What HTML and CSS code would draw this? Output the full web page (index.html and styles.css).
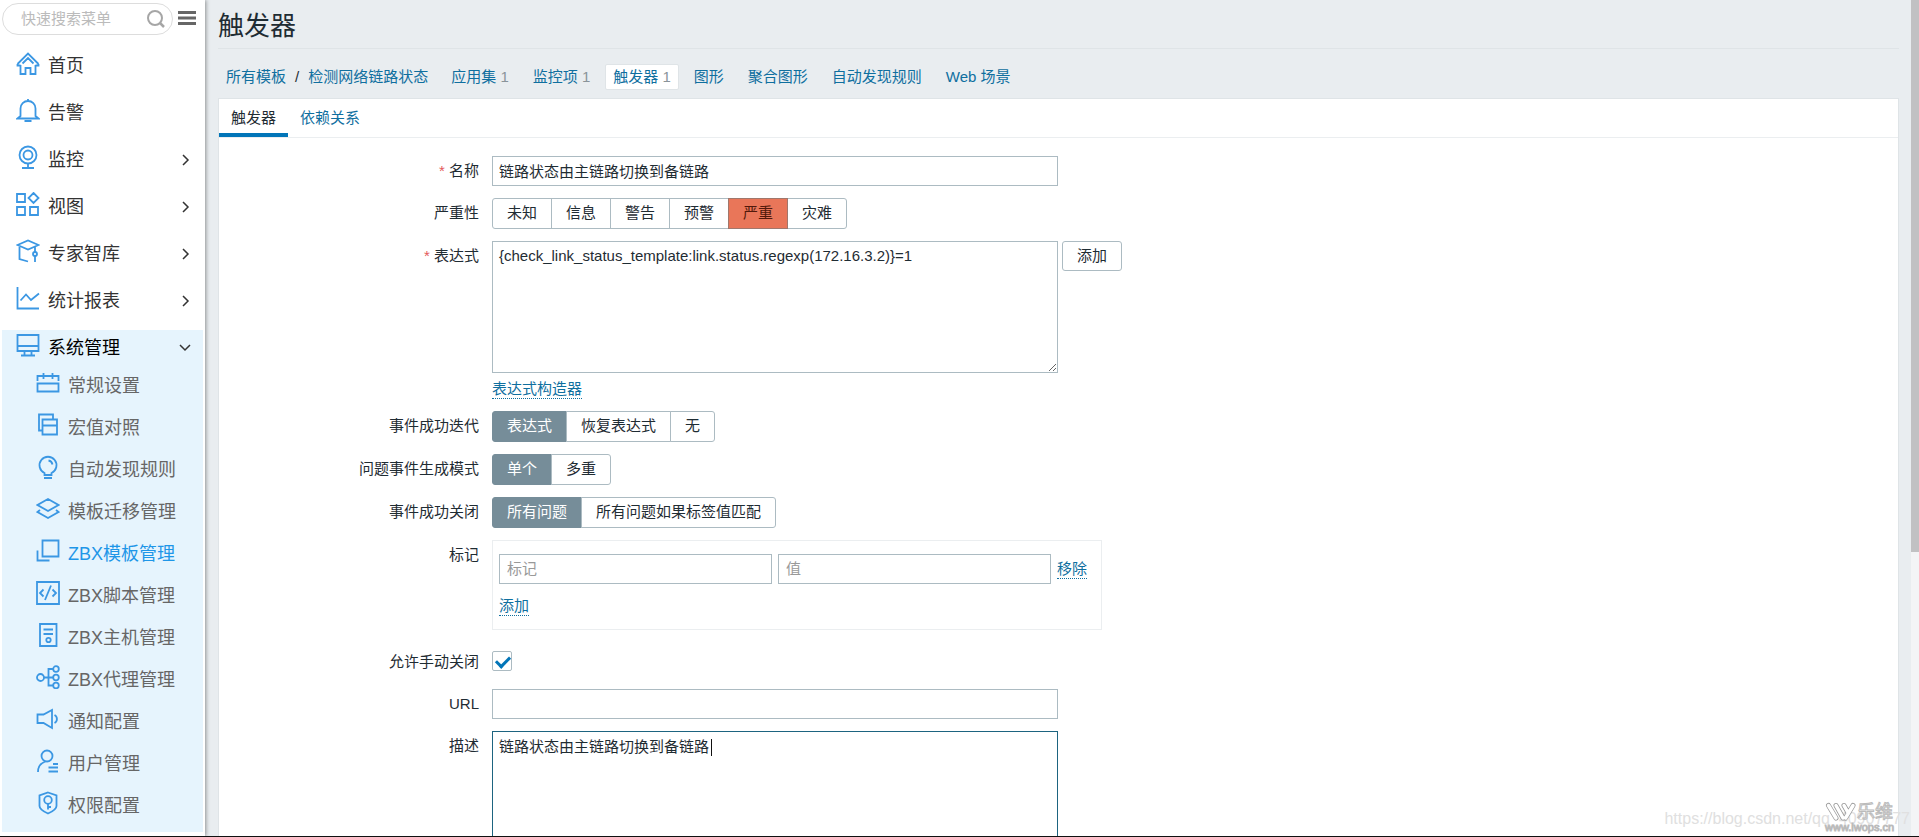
FILE: index.html
```html
<!DOCTYPE html>
<html lang="zh-CN">
<head>
<meta charset="utf-8">
<title>触发器</title>
<link rel="stylesheet" href="styles.css">
</head>
<body>
<div class="app">
  <aside class="sidebar">
    <div class="search-row">
      <div class="search">
        <input class="search-input" type="text" placeholder="快速搜索菜单" aria-label="快速搜索菜单">
        <button class="icon-button" type="button" aria-label="搜索"><svg width="20" height="20" viewBox="0 0 20 20" fill="none" stroke="#a6a6a6" stroke-width="2"><circle cx="9" cy="9" r="7"/><path d="M14 14l4 4" stroke-width="2.5"/></svg></button>
      </div>
      <button class="icon-button" type="button" aria-label="折叠菜单"><svg width="18" height="16" viewBox="0 0 18 16" fill="#666"><path d="M0 0h18v3H0zM0 5.500h18v3H0zM0 11h18v3H0z"/></svg></button>
    </div>
    <nav class="menu">
      <a class="menu-item" href="#"><svg class="icon" viewBox="0 0 24 24"><path d="M1.500 13L12 2.500 22.500 13M4.500 14v9h5v-6h5v6h5v-9M6.500 12.500L12 7l5.500 5.500M1.500 13v1.500h3M22.500 13v1.500h-3"/></svg><span>首页</span></a>
      <a class="menu-item" href="#"><svg class="icon" viewBox="0 0 24 24"><path d="M12 1v2M4.500 18v-7.500a7.500 7.500 0 0 1 15 0V18l3 2.500h-21zM8.500 23h7"/></svg><span>告警</span></a>
      <a class="menu-item" href="#"><svg class="icon" viewBox="0 0 24 24"><circle cx="12" cy="10" r="8.500"/><circle cx="12" cy="10" r="4.500"/><path d="M12 18.500V23M6 23h12"/></svg><span>监控</span><svg class="chevron" viewBox="0 0 10 10"><path d="M3 0l5 5-5 5"/></svg></a>
      <a class="menu-item" href="#"><svg class="icon" viewBox="0 0 24 24"><path d="M1 2h8v8H1zM1 15h8v8H1zM14 15h8v8h-8zM17.500 1l5 5-5 5-5-5z"/></svg><span>视图</span><svg class="chevron" viewBox="0 0 10 10"><path d="M3 0l5 5-5 5"/></svg></a>
      <a class="menu-item" href="#"><svg class="icon" viewBox="0 0 24 24"><path d="M1.500 6L12 1.500 22.500 6 12 10.500zM3.500 8v12l8.500 2.500M19 7.500V13M19 17v6"/><circle cx="19" cy="15" r="2"/></svg><span>专家智库</span><svg class="chevron" viewBox="0 0 10 10"><path d="M3 0l5 5-5 5"/></svg></a>
      <a class="menu-item" href="#"><svg class="icon" viewBox="0 0 24 24"><path d="M1.500 1v21.500H23M4.500 14.500L10 8.500l5 5.500 8-6.500"/></svg><span>统计报表</span><svg class="chevron" viewBox="0 0 10 10"><path d="M3 0l5 5-5 5"/></svg></a>
      <div class="menu-group">
        <a class="menu-item menu-item-open" href="#"><svg class="icon" viewBox="0 0 24 24"><path d="M1.500 2h21v16h-21zM1.500 13h21M8.500 18v4M15.500 18v4M5 22.500h14"/></svg><span>系统管理</span><svg class="chevron" viewBox="0 0 10 10"><path d="M0 2l5 5 5-5"/></svg></a>
        <a class="submenu-item" href="#"><svg class="icon" viewBox="0 0 24 24"><path d="M1.500 10V5h21v5M1.500 12.500h21v8h-21zM7.500 2v6M16.500 2v6"/></svg><span>常规设置</span></a>
        <a class="submenu-item" href="#"><svg class="icon" viewBox="0 0 24 24"><path d="M6.500 6.500h14.500v15H6.500zM6.500 12.500H21M6.500 17.500H3v-16h14v5"/></svg><span>宏值对照</span></a>
        <a class="submenu-item" href="#"><svg class="icon" viewBox="0 0 24 24"><path d="M8.500 18a8.500 8.500 0 1 1 7 0v2h-7zM12.500 5.500a5 5 0 0 1 4 4M8 23h8"/></svg><span>自动发现规则</span></a>
        <a class="submenu-item" href="#"><svg class="icon" viewBox="0 0 24 24"><path d="M12 2l10.500 6L12 14 1.500 8zM4 13l-2.500 2L12 21l10.500-6-2.500-2"/></svg><span>模板迁移管理</span></a>
        <a class="submenu-item submenu-item-active" href="#"><svg class="icon" viewBox="0 0 24 24"><path d="M6.500 1.500h16v16h-16zM1.500 11.500v10h12"/></svg><span>ZBX模板管理</span></a>
        <a class="submenu-item" href="#"><svg class="icon" viewBox="0 0 24 24"><path d="M1 1h22v22H1zM7.500 8.500L4 12l3.500 3.500M16.500 8.500L20 12l-3.500 3.500M15 4.500L9 19"/></svg><span>ZBX脚本管理</span></a>
        <a class="submenu-item" href="#"><svg class="icon" viewBox="0 0 24 24"><path d="M4 1h16.500v22H4zM7.500 6.500H17M7.500 11H17"/><circle cx="12.500" cy="17" r="2.200"/></svg><span>ZBX主机管理</span></a>
        <a class="submenu-item" href="#"><svg class="icon" viewBox="0 0 24 24"><circle cx="4.500" cy="12.500" r="3.500"/><circle cx="20" cy="4" r="2.800"/><circle cx="20" cy="12.500" r="2.800"/><circle cx="20" cy="20.500" r="2.800"/><path d="M8 12.500h9M17 4h-4.500v16.500H17"/></svg><span>ZBX代理管理</span></a>
        <a class="submenu-item" href="#"><svg class="icon" viewBox="0 0 24 24"><path d="M1.500 7.500h6L16 3v18l-8.500-5h-6zM18.500 8a4.500 4.500 0 0 1 0 8"/></svg><span>通知配置</span></a>
        <a class="submenu-item" href="#"><svg class="icon" viewBox="0 0 24 24"><circle cx="11" cy="7" r="5.500"/><path d="M2 23c0-6 3-9 7.500-10.500M17 15h5M12.500 18.500H22M12.500 22.500H22"/></svg><span>用户管理</span></a>
        <a class="submenu-item" href="#"><svg class="icon" viewBox="0 0 24 24"><path d="M12 1.500l8.500 3V15c0 3-4 5.500-8.500 7.500C7.500 20.500 3.500 18 3.500 15V4.500z"/><circle cx="12" cy="9" r="3.800"/><path d="M12 12.800v5.700M12 16h3"/></svg><span>权限配置</span></a>
      </div>
    </nav>
  </aside>

  <main class="main">
    <h1 class="title">触发器</h1>
    <nav class="crumbs">
      <div class="path"><a href="#">所有模板</a><span>/</span><a href="#">检测网络链路状态</a></div>
      <a class="crumb" href="#">应用集 <sup>1</sup></a>
      <a class="crumb" href="#">监控项 <sup>1</sup></a>
      <a class="crumb crumb-selected" href="#">触发器 <sup>1</sup></a>
      <a class="crumb" href="#">图形</a>
      <a class="crumb" href="#">聚合图形</a>
      <a class="crumb" href="#">自动发现规则</a>
      <a class="crumb" href="#">Web 场景</a>
    </nav>
    <section class="panel">
      <div class="tabs">
        <a class="tab tab-selected" href="#">触发器</a>
        <a class="tab" href="#">依赖关系</a>
      </div>
      <form class="form">
        <label class="label required" for="name">名称</label>
        <input class="text wide" id="name" type="text" value="链路状态由主链路切换到备链路">

        <span class="label" id="l-severity">严重性</span>
        <div class="segments" role="group" aria-labelledby="l-severity">
          <button class="segment" type="button">未知</button><button class="segment" type="button">信息</button><button class="segment" type="button">警告</button><button class="segment" type="button">预警</button><button class="segment segment-high" type="button">严重</button><button class="segment" type="button">灾难</button>
        </div>

        <label class="label required" for="expression">表达式</label>
        <div class="expression">
          <div class="expression-row">
            <textarea class="area wide" id="expression">{check_link_status_template:link.status.regexp(172.16.3.2)}=1</textarea>
            <button class="button" type="button">添加</button>
          </div>
          <a class="dotted" href="#">表达式构造器</a>
        </div>

        <span class="label" id="l-recovery">事件成功迭代</span>
        <div class="segments" role="group" aria-labelledby="l-recovery">
          <button class="segment segment-on" type="button">表达式</button><button class="segment" type="button">恢复表达式</button><button class="segment" type="button">无</button>
        </div>

        <span class="label" id="l-mode">问题事件生成模式</span>
        <div class="segments" role="group" aria-labelledby="l-mode">
          <button class="segment segment-on" type="button">单个</button><button class="segment" type="button">多重</button>
        </div>

        <span class="label" id="l-close">事件成功关闭</span>
        <div class="segments" role="group" aria-labelledby="l-close">
          <button class="segment segment-on" type="button">所有问题</button><button class="segment" type="button">所有问题如果标签值匹配</button>
        </div>

        <span class="label">标记</span>
        <div class="tags">
          <div class="tag-row">
            <input class="text tag" type="text" placeholder="标记" aria-label="标记">
            <input class="text tag" type="text" placeholder="值" aria-label="值">
            <a class="dotted" href="#">移除</a>
          </div>
          <a class="dotted" href="#">添加</a>
        </div>

        <label class="label label-check" for="manual">允许手动关闭</label>
        <div class="check-cell"><input class="check" id="manual" type="checkbox" checked></div>

        <label class="label" for="url">URL</label>
        <input class="text wide" id="url" type="text">

        <label class="label" for="description">描述</label>
        <div class="description">
          <textarea class="area area-focused wide" id="description">链路状态由主链路切换到备链路</textarea>
          <span class="caret"></span>
        </div>
      </form>
    </section>
  </main>

  <div class="scrollbar"><div class="thumb"></div></div>
</div>
<div class="watermark">https://blog.csdn.net/qq_40907777</div>
<div class="brand">
  <svg width="32" height="20" viewBox="0 0 32 20" fill="none" stroke-linecap="round" stroke-linejoin="round"><path stroke="#999" stroke-width="5" d="M3.500 3.500L11 16M11 3.500L18 16M19 3.500l4 7M28 3.500L20.500 16"/><path stroke="#fff" stroke-width="3.500" d="M3.500 3.500L11 16M11 3.500L18 16M19 3.500l4 7M28 3.500L20.500 16"/></svg>
  <span class="brand-name">乐维</span>
  <span class="brand-site">www.lwops.cn</span>
</div>
</body>
</html>
```

FILE: styles.css
```css
* { box-sizing: border-box; }

body {
  margin: 0;
  height: 100vh;
  overflow: hidden;
  border-bottom: 1px solid #111;
  background: #e9edf0;
  color: #1f2c33;
  font: 15px/20px "Liberation Sans", "Noto Sans CJK SC", sans-serif;
}

a { color: #0f6f9f; text-decoration: none; }
input, textarea, button { font: inherit; color: inherit; }

.app { display: flex; height: 100%; }

/* sidebar */
.sidebar {
  flex: none;
  width: 205px;
  padding: 3px 2px 0;
  background: #fff;
  box-shadow: 1px 0 4px rgba(0, 0, 0, .4);
  z-index: 1;
}
.search-row { display: flex; align-items: center; gap: 5px; }
.search {
  display: flex;
  align-items: center;
  width: 171px;
  height: 32px;
  padding: 0 6px 0 18px;
  border: 1px solid #ddd;
  border-radius: 16px;
}
.search-input { flex: 1; min-width: 0; padding: 0; border: 0; outline: 0; background: none; }
.search-input::placeholder { color: #bbb; opacity: 1; }
.icon-button { display: flex; padding: 0; border: 0; background: none; }

.menu { display: flex; flex-direction: column; gap: 12px; padding-top: 13px; }
.menu-item, .submenu-item { display: flex; align-items: center; color: #333; font-size: 18px; }
.menu-item { height: 35px; padding: 0 13px 0 14px; }
.menu-item-open { color: #000; }
.submenu-item { height: 42px; padding-left: 34px; color: #666; }
.submenu-item-active { color: #1e96e8; }
.menu-group { padding-bottom: 5px; background: #e6f4fd; }
.icon {
  flex: none;
  width: 24px;
  height: 24px;
  margin: 0 8px 6px 0;
  fill: none;
  stroke: #3b97e3;
  stroke-width: 1.8;
}
.chevron {
  width: 10px;
  height: 10px;
  margin-left: auto;
  overflow: visible;
  fill: none;
  stroke: #333;
  stroke-width: 1.5;
}

/* page head */
.main { flex: 1; min-width: 0; padding: 0 12px 0 13px; overflow: hidden; }
.title {
  margin: 0 0 15px;
  padding: 10px 0 6px;
  border-bottom: 1px solid #dfe4e7;
  font-size: 26px;
  font-weight: 400;
  line-height: 32px;
}
.crumbs { display: flex; align-items: center; gap: 6px; height: 25px; margin-bottom: 9px; }
.path { display: flex; gap: 9px; margin: 0 8px; }
.crumb { padding: 2px 8px; border: 1px solid transparent; }
.crumb-selected { padding: 2px 7px; background: #fff; border-color: #dfe4e7; border-radius: 2px; }
.crumb sup { color: #8a949a; font-size: 15px; line-height: 1; vertical-align: baseline; }

/* panel */
.panel { border: 1px solid #dfe4e7; background: #fff; }
.tabs { display: flex; border-bottom: 1px solid #ebeef0; }
.tab { padding: 9px 12px 5px; border-bottom: 4px solid transparent; }
.tab-selected { border-bottom-color: #0275b8; color: #1f2c33; }

.form {
  display: grid;
  grid-template-columns: 260px 1fr;
  gap: 12px 13px;
  align-items: start;
  justify-items: start;
  padding-top: 18px;
}
.label { justify-self: end; line-height: 30px; }
.required::before { content: "* "; color: #e45959; }
.wide { width: 566px; }
.text { height: 30px; padding: 0 6px 2px; border: 1px solid #acbbc2; outline: 0; background: #fff; }
.text::placeholder { color: #999; opacity: 1; }
.area {
  display: block;
  height: 132px;
  padding: 4px 6px;
  border: 1px solid #acbbc2;
  outline: 0;
  background: #fff;
}
.area-focused { padding-top: 5px; border-color: #1d6480; }

.segments { display: flex; height: 31px; }
.segment {
  margin-left: -1px;
  padding: 0 14px 2px;
  border: 1px solid #acbbc2;
  background: #fff;
}
.segment:first-child { margin-left: 0; border-radius: 3px 0 0 3px; }
.segment:last-child { border-radius: 0 3px 3px 0; }
.segment-on { border-color: #768d99; background: #768d99; color: #fff; }
.segment-high { z-index: 1; border-color: #a0776c; background: #e97659; color: #52190b; }

.expression-row { display: flex; align-items: flex-start; gap: 4px; margin-bottom: 6px; }
.button { height: 30px; padding: 0 14px; border: 1px solid #acbbc2; border-radius: 3px; background: #fff; }
.dotted { display: inline-block; border-bottom: 1px dotted #0f6f9f; line-height: 19px; }
.expression > .dotted { display: block; width: max-content; }

.tags { width: 610px; padding: 13px 6px; border: 1px solid #ebeef0; }
.tag-row { display: flex; align-items: center; gap: 6px; margin-bottom: 12px; }
.tag { width: 273px; padding-left: 7px; }

.label-check { height: 35px; line-height: 40px; }
.check-cell { height: 35px; padding-top: 9px; }
.check {
  appearance: none;
  display: block;
  width: 20px;
  height: 20px;
  margin: 0;
  padding: 4px 3px;
  border: 1px solid #acbbc2;
  border-radius: 2px;
}
.check:checked::before {
  content: "";
  display: block;
  width: 11px;
  height: 6px;
  border: solid #0275b8;
  border-width: 0 0 3px 3px;
  transform: rotate(-45deg);
}
.description { position: relative; }
.caret { position: absolute; left: 219px; top: 8px; width: 1px; height: 17px; background: #111; }

/* page scrollbar */
.scrollbar { flex: none; width: 8px; background: #f3f4f6; }
.thumb { height: 66%; background: #c1c1c3; }

/* marks over the page */
.watermark {
  position: absolute;
  right: 9px;
  bottom: 8px;
  color: #e0e0e0;
  font-size: 16px;
}
.brand {
  position: absolute;
  right: 24px;
  bottom: 5px;
  display: grid;
  grid-template-columns: 32px 38px;
  color: #fff;
  -webkit-text-stroke: 1px #bbb;
}
.brand-name { font-size: 18px; line-height: 20px; }
.brand-site { grid-column: 1 / 3; font-size: 11px; line-height: 10px; }
```
